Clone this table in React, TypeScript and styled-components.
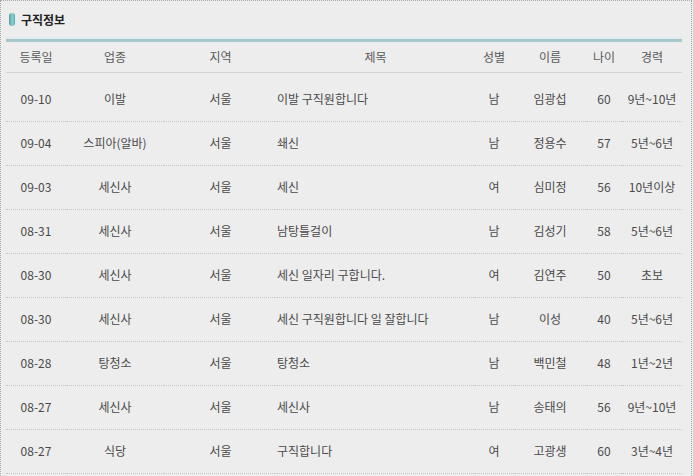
import React from "react";
import styled, { createGlobalStyle } from "styled-components";

const Global = createGlobalStyle`
  html, body { margin: 0; padding: 0; background: #ededed; }
  body { font-family: "Noto Sans CJK KR", "Noto Sans", sans-serif; overflow: hidden; }
`;

const Frame = styled.div`
  width: 692px;
  box-sizing: border-box;
  min-height: 476px;
  border-top: 1px dotted #a8a8a8;
  border-left: 1px dotted #a8a8a8;
  border-right: 1px dotted #a8a8a8;
  background: #ededed;
  padding: 0 9px 0 5px;
`;

const TitleRow = styled.div`
  display: flex;
  align-items: center;
  gap: 6px;
  height: 36px;
  padding-left: 3px;
`;

const Pill = styled.span`
  width: 6px;
  height: 13px;
  border-radius: 3px;
  background: linear-gradient(90deg, #4f9ea6, #8fd0d4 60%, #5aa4ab);
`;

const Title = styled.h2`
  margin: 0;
  font-size: 12px;
  font-weight: 700;
  color: #222;
  letter-spacing: 0;
`;

const Bar = styled.div`
  height: 2px;
  background: #dfeaf2;
  border-bottom: 3px solid #a9c8cc;
`;

const Table = styled.table`
  width: 676px;
  border-collapse: collapse;
  table-layout: fixed;
  font-size: 12px;
`;

const Th = styled.th`
  font-weight: 400;
  color: #5a5a5a;
  height: 29px;
  padding: 0 0 1px 0;
  line-height: 16px;
  vertical-align: middle;
  text-align: center;
  border-bottom: 1px solid #d4d4d4;
  white-space: nowrap;
`;

const Spacer = styled.tr`
  height: 5px;
`;

const Tr = styled.tr`
  border-bottom: 1px dotted #c6c6c6;
`;

const Td = styled.td<{ $left?: boolean }>`
  height: 43px;
  padding: 0;
  color: #4a4a4a;
  line-height: 16px;
  text-align: ${(p) => (p.$left ? "left" : "center")};
  vertical-align: middle;
  white-space: nowrap;
  overflow: hidden;
`;

const cols = [60, 98, 113, 197, 40, 72, 36, 60];
const headers = ["등록일", "업종", "지역", "제목", "성별", "이름", "나이", "경력"];

const rows: string[][] = [
  ["09-10", "이발", "서울", "이발 구직원합니다", "남", "임광섭", "60", "9년~10년"],
  ["09-04", "스피아(알바)", "서울", "쇄신", "남", "정용수", "57", "5년~6년"],
  ["09-03", "세신사", "서울", "세신", "여", "심미정", "56", "10년이상"],
  ["08-31", "세신사", "서울", "남탕틀걸이", "남", "김성기", "58", "5년~6년"],
  ["08-30", "세신사", "서울", "세신 일자리 구합니다.", "여", "김연주", "50", "초보"],
  ["08-30", "세신사", "서울", "세신 구직원합니다 일 잘합니다", "남", "이성", "40", "5년~6년"],
  ["08-28", "탕청소", "서울", "탕청소", "남", "백민철", "48", "1년~2년"],
  ["08-27", "세신사", "서울", "세신사", "남", "송태의", "56", "9년~10년"],
  ["08-27", "식당", "서울", "구직합니다", "여", "고광생", "60", "3년~4년"],
];

export default function App() {
  return (
    <>
      <Global />
      <Frame>
        <TitleRow>
          <Pill />
          <Title>구직정보</Title>
        </TitleRow>
        <Bar />
        <Table>
          <colgroup>
            {cols.map((w, i) => (
              <col key={i} style={{ width: w }} />
            ))}
          </colgroup>
          <thead>
            <tr>
              {headers.map((h) => (
                <Th key={h}>{h}</Th>
              ))}
            </tr>
          </thead>
          <tbody>
            <Spacer>
              <td colSpan={8} />
            </Spacer>
            {rows.map((r, i) => (
              <Tr key={i}>
                {r.map((c, j) => (
                  <Td key={j} $left={j === 3}>
                    {c}
                  </Td>
                ))}
              </Tr>
            ))}
          </tbody>
        </Table>
      </Frame>
    </>
  );
}
